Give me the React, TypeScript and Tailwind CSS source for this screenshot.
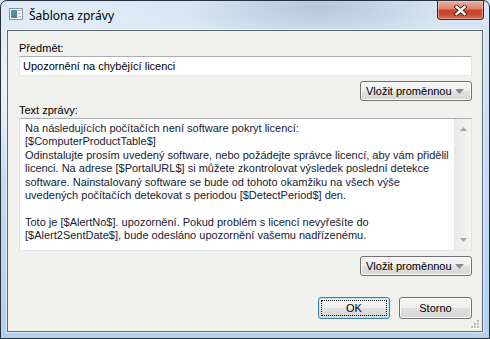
import React from "react";

const lines = [
  "Na následujících počítačích není software pokryt licencí:",
  "[$ComputerProductTable$]",
  "Odinstalujte prosím uvedený software, nebo požádejte správce licencí, aby vám přidělil",
  "licenci. Na adrese [$PortalURL$] si můžete zkontrolovat výsledek poslední detekce",
  "software. Nainstalovaný software se bude od tohoto okamžiku na všech výše",
  "uvedených počítačích detekovat s periodou [$DetectPeriod$] den.",
  "",
  "Toto je [$AlertNo$]. upozornění. Pokud problém s licencí nevyřešíte do",
  "[$Alert2SentDate$], bude odesláno upozornění vašemu nadřízenému.",
];

function DropButton() {
  return (
    <div className="flex justify-end">
      <button className="h-[20px] w-[112px] rounded-[3px] border border-[#707070] bg-[linear-gradient(180deg,#f6f6f6_0%,#eeeeee_50%,#e0e0e0_50%,#d6d6d6_100%)] shadow-[inset_0_0_0_1px_#fcfcfc] flex items-center pl-[5px] pr-[7px] text-[11px] text-black">
        <span className="leading-none">Vložit proměnnou</span>
        <svg className="ml-auto" width="9" height="5" viewBox="0 0 9 5">
          <path d="M0 0 H9 L4.5 5 Z" fill="#8a8a8a" />
        </svg>
      </button>
    </div>
  );
}

export default function App() {
  return (
    <div className="w-[490px] h-[339px] overflow-hidden bg-[#cfdff0] font-['Liberation_Sans',Arial,sans-serif]">
      <div className="w-full h-full rounded-t-[7px] border border-[#27313d] flex flex-col bg-[radial-gradient(ellipse_60%_40%_at_12%_25%,rgba(255,255,255,0.75),transparent_70%),radial-gradient(ellipse_35%_12%_at_65%_2%,rgba(120,140,165,0.35),transparent_80%),linear-gradient(180deg,#d9e7f5_0%,#c9ddf2_45%,#b3d0ee_100%)]">
        {/* Title bar */}
        <div className="h-[29px] flex items-start shrink-0">
          <svg className="ml-[8px] mt-[7px]" width="14" height="12" viewBox="0 0 14 12">
            <defs>
              <linearGradient id="ig" x1="0" y1="0" x2="1" y2="1">
                <stop offset="0" stopColor="#5aa37d" />
                <stop offset="0.5" stopColor="#4a8fa8" />
                <stop offset="1" stopColor="#3a6fc0" />
              </linearGradient>
            </defs>
            <rect x="0.5" y="0.5" width="13" height="11" fill="#f4f6f8" stroke="#8e959e" />
            <rect x="2" y="2" width="6" height="8" fill="url(#ig)" />
            <rect x="9" y="2" width="3" height="1" fill="#9aa3ad" />
            <rect x="9" y="5" width="3" height="1" fill="#b5bcc4" />
            <rect x="9" y="8" width="3" height="1" fill="#b5bcc4" />
          </svg>
          <span className="ml-[6px] mt-[7px] text-[12px] leading-[16px] text-black font-['Noto_Sans',sans-serif]">Šablona zprávy</span>
          <div className="ml-auto mr-[5px] w-[47px] h-[19px] rounded-b-[4px] border border-t-0 border-[#4d2119] bg-[linear-gradient(180deg,#eab0a2_0%,#dd8470_42%,#c8442c_52%,#c94a31_75%,#d9715a_100%)] shadow-[inset_0_0_0_1px_rgba(255,220,210,0.45)] flex items-center justify-center">
            <svg width="13" height="11" viewBox="0 0 13 11">
              <path d="M2.5 2 L10.5 9 M10.5 2 L2.5 9" stroke="#3d1a14" strokeWidth="4.2" strokeLinecap="square" />
              <path d="M2.5 2 L10.5 9 M10.5 2 L2.5 9" stroke="#ffffff" strokeWidth="2.4" strokeLinecap="square" />
            </svg>
          </div>
        </div>

        {/* Client area */}
        <div className="flex-1 px-[6px] pb-[6px] flex">
          <div className="relative flex-1 border border-[#5d6975] bg-[#f0f0ed] shadow-[0_0_0_1px_rgba(255,255,255,0.55)] pl-[11px] pr-[10px] pt-[11px] flex flex-col text-[11px] text-black">
            <div className="h-[13px] leading-[13px]">Předmět:</div>
            <div className="mt-[1px] h-[20px] border border-[#e2e3ea] border-t-[#abadb3] border-b-[#e3e9ef] bg-white flex items-center pl-[3px] leading-none">
              Upozornění na chybějící licenci
            </div>
            <div className="mt-[5px]">
              <DropButton />
            </div>
            <div className="mt-[3px] h-[13px] leading-[13px]">Text zprávy:</div>
            <div className="mt-[1px] h-[133px] border border-[#e2e3ea] border-t-[#abadb3] border-b-[#e3e9ef] bg-white flex">
              <div className="flex-1 pl-[5px] pt-[3px] text-[#161a33] whitespace-pre">
                {lines.map((l, i) => (
                  <div key={i} className="h-[13.4px] leading-[13.4px]">
                    {l}
                  </div>
                ))}
              </div>
              <div className="w-[17px] border-l border-[#e6e6e6] bg-[linear-gradient(90deg,#eaeaea,#f3f3f3)] flex flex-col items-center justify-between py-[8px]">
                <svg width="7" height="4" viewBox="0 0 7 4">
                  <path d="M0 4 H7 L3.5 0 Z" fill="#a8a8a8" />
                </svg>
                <svg width="7" height="4" viewBox="0 0 7 4">
                  <path d="M0 0 H7 L3.5 4 Z" fill="#a8a8a8" />
                </svg>
              </div>
            </div>
            <div className="mt-[5px]">
              <DropButton />
            </div>
            <div className="mt-[21px] flex justify-end gap-[9px]">
              <button className="h-[22px] w-[72px] rounded-[3px] border border-[#3c7fb1] bg-[linear-gradient(180deg,#f6f6f6_0%,#eeeeee_50%,#e0e0e0_50%,#d6d6d6_100%)] shadow-[inset_0_0_0_1px_#bfe6f8] outline-1 outline-dotted outline-black outline-offset-[-4px] text-[11px] text-black">
                OK
              </button>
              <button className="h-[22px] w-[73px] rounded-[3px] border border-[#707070] bg-[linear-gradient(180deg,#f6f6f6_0%,#eeeeee_50%,#e0e0e0_50%,#d6d6d6_100%)] shadow-[inset_0_0_0_1px_#fcfcfc] text-[11px] text-black">
                Storno
              </button>
            </div>
            <svg className="absolute right-[2px] bottom-[2px]" width="10" height="10" viewBox="0 0 10 10">
              {[
                [7, 1],
                [4, 4],
                [7, 4],
                [1, 7],
                [4, 7],
                [7, 7],
              ].map(([x, y], i) => (
                <g key={i}>
                  <rect x={x + 1} y={y + 1} width="2" height="2" fill="#ffffff" />
                  <rect x={x} y={y} width="2" height="2" fill="#bcbcbc" />
                </g>
              ))}
            </svg>
          </div>
        </div>
      </div>
    </div>
  );
}
